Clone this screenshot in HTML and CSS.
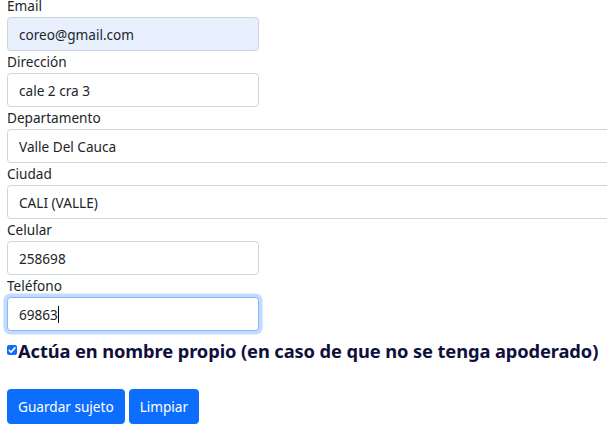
FILE: index.html
```html
<!DOCTYPE html>
<html lang="es">
<head>
<meta charset="utf-8">
<link rel="stylesheet" href="styles.css">
</head>
<body>
<form class="form">
  <div class="field">
    <label class="lbl">Email</label>
    <input class="ctl narrow autofill" type="text" value="coreo@gmail.com">
  </div>
  <div class="field">
    <label class="lbl">Dirección</label>
    <input class="ctl narrow" type="text" value="cale 2 cra 3">
  </div>
  <div class="field">
    <label class="lbl">Departamento</label>
    <input class="ctl wide" type="text" value="Valle Del Cauca">
  </div>
  <div class="field">
    <label class="lbl">Ciudad</label>
    <input class="ctl wide" type="text" value="CALI (VALLE)">
  </div>
  <div class="field">
    <label class="lbl">Celular</label>
    <input class="ctl narrow" type="text" value="258698">
  </div>
  <div class="field">
    <label class="lbl">Teléfono</label>
    <div class="ctl narrow focus"><span>69863</span><span class="caret"></span></div>
  </div>
  <label class="check">
    <span class="box"><svg viewBox="0 0 10 10" width="10" height="10"><path d="M2.2 5.2 L4.1 7.1 L7.9 2.9" fill="none" stroke="#fff" stroke-width="1.6" stroke-linecap="round" stroke-linejoin="round"/></svg></span>
    <span class="check-text">Actúa en nombre propio (en caso de que no se tenga apoderado)</span>
  </label>
  <div class="actions">
    <button type="button" class="btn">Guardar sujeto</button>
    <button type="button" class="btn">Limpiar</button>
  </div>
</form>
</body>
</html>
```

FILE: styles.css
```css
html, body {
  margin: 0;
  padding: 0;
  background: #fff;
  overflow: hidden;
}
body {
  font-family: "Noto Sans", "Open Sans", sans-serif;
  font-size: 14.4px;
  color: #212529;
}
.form {
  margin-top: -5px;
  padding: 0 7px;
  display: flex;
  flex-direction: column;
}
.field {
  display: flex;
  flex-direction: column;
}
.lbl {
  display: block;
  line-height: 22px;
  height: 22px;
  font-size: 13.6px;
  color: #212529;
}
.ctl {
  box-sizing: border-box;
  height: 34px;
  padding: 0 11px;
  border: 1px solid #ced4da;
  border-radius: 3.6px;
  font-family: inherit;
  font-size: 13.6px;
  color: #212529;
  background: #fff;
  outline: none;
  display: flex;
  align-items: center;
}
.narrow { width: 252px; }
.wide { width: 700px; }
.autofill { background: #e8f0fe; }
.focus {
  border-color: #86b7fe;
  box-shadow: 0 0 0 3.6px rgba(13, 110, 253, 0.25);
}
.caret {
  display: inline-block;
  width: 1px;
  height: 17px;
  background: #000;
}
.check {
  display: flex;
  align-items: center;
  margin-top: 4px;
  height: 30px;
}
.box {
  width: 10px;
  height: 10px;
  border-radius: 2px;
  background: #0d6efd;
  display: flex;
  margin-right: 1px;
}
.check-text {
  font-weight: 700;
  font-size: 18.3px;
  letter-spacing: -0.1px;
  color: #0f0f3c;
  white-space: nowrap;
}
.actions {
  display: flex;
  gap: 4px;
  margin-top: 24px;
}
.btn {
  box-sizing: border-box;
  height: 35px;
  padding: 0 10px;
  border: 1px solid #0d6efd;
  border-radius: 3.6px;
  background: #0d6efd;
  color: #fff;
  font-family: inherit;
  font-size: 13.6px;
  cursor: pointer;
}
```
